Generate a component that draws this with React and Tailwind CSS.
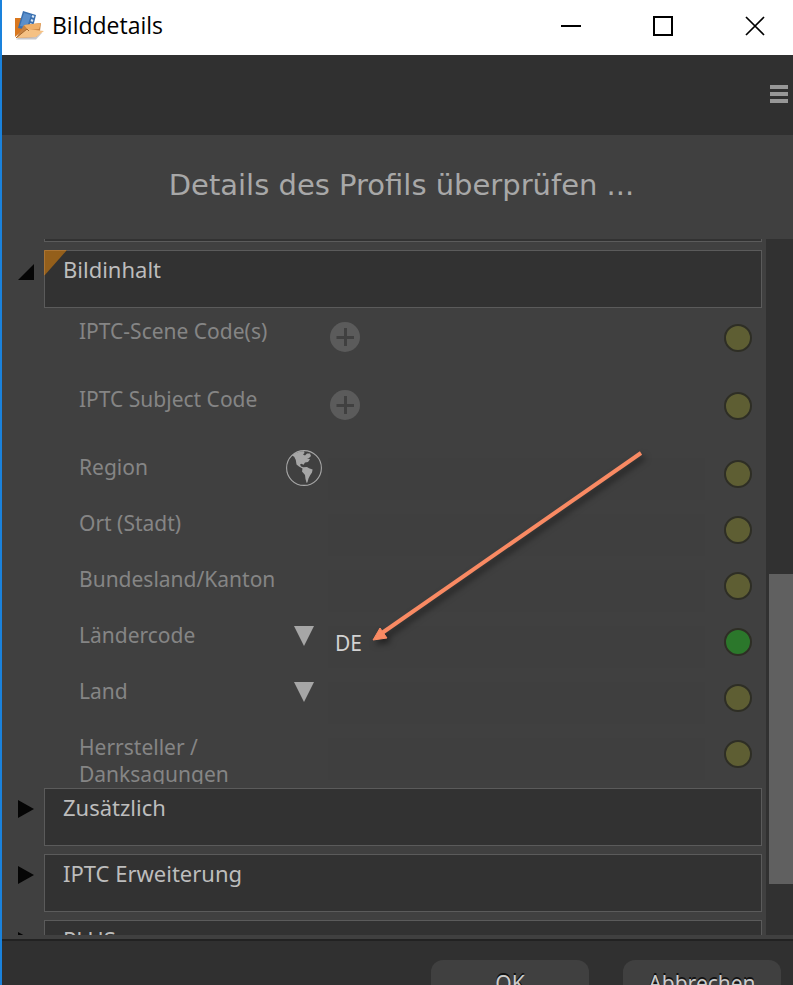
const statusColors = {
  open: "bg-[#5e5e33]",
  filled: "bg-[#2b772b]",
};

const fields = [
  { id: "scene", label: "IPTC-Scene Code(s)", type: "add", status: "open" },
  { id: "subject", label: "IPTC Subject Code", type: "add", status: "open" },
  { id: "region", label: "Region", icon: "globe", status: "open" },
  { id: "city", label: "Ort (Stadt)", status: "open" },
  { id: "state", label: "Bundesland/Kanton", status: "open" },
  { id: "countryCode", label: "Ländercode", icon: "down", value: "DE", status: "filled" },
  { id: "country", label: "Land", icon: "down", status: "open" },
  { id: "credits", label: "Herrsteller / Danksagungen", status: "open" },
];

function AppIcon() {
  return (
    <svg width="30" height="30" viewBox="0 0 30 30" aria-hidden="true">
      <path d="M2 28.5 L22 28.5 L28 22 L8 24 Z" fill="#8f8f9a" opacity="0.5" />
      <path d="M1 7 H8 V20 L1 26 Z" fill="#d9771e" />
      <path d="M9 0 L22 4 L18 20 L4 17 Z" fill="#3a70b0" />
      <path d="M10 2 L17 4 L13 16 L6 15 Z" fill="#5b8fcb" />
      <path d="M18 5 L20 6 M17 9 L19 10 M16 13 L18 14" stroke="#dce8f5" strokeWidth="2" />
      <path d="M10 14 L27 12 L26 20 L22 26 L2 27 Z" fill="#c98342" />
      <path d="M10 14 L27 12 L25 18 L14 19 Z" fill="#efb06a" />
      <path d="M2 27 L13 18 L30 20 L22 26 Z" fill="#f5c184" />
      <path d="M2 27 L13 18 L15 20" fill="none" stroke="#a5672d" />
    </svg>
  );
}

function Globe() {
  return (
    <svg width="36" height="36" viewBox="0 0 36 36" aria-hidden="true">
      <circle cx="18" cy="18" r="17.4" fill="none" stroke="#a6a6a6" strokeWidth="1.1" />
      <path
        fill="#a6a6a6"
        d="M6 5.5 L9 3.2 L14 1.6 L18 1.2 L18.5 3 L17 4.5 L19 5.5 L21 3.4 L24 3.6 L25 6 L23 8 L21 8.2 L24 9.2 L22 12 L19 12.5 L17.5 14.8 L15.5 13.8 L14 14.5 L15 16.5 L17.5 17.2 L21 17 L23 18.3 L26.6 19.5 L26 22.5 L24 25.5 L22.5 28.5 L21.4 32.5 L20.5 32.8 L19.5 29 L19 25 L16 21.5 L16.5 18.6 L13 16.5 L10.5 14.5 L9.8 10 L8.2 6.8 Z"
      />
    </svg>
  );
}

function SectionHeader({ title, open = false }) {
  return (
    <button type="button" aria-expanded={open} className="flex w-full items-start gap-2.5 text-left">
      <svg width="16" height="18" viewBox="0 0 16 18" className="mt-3 shrink-0" aria-hidden="true">
        <path d={open ? "M16 2 V18 H0 Z" : "M0 0 L16 9 L0 18 Z"} fill="#050505" />
      </svg>
      <span className="relative h-[58px] flex-1 border border-[#5b5b5b] bg-[#323232] pt-1 pl-[18px] text-[22px] leading-7 text-[#bdbdbd]">
        {open && (
          <svg width="23" height="26" viewBox="0 0 23 26" className="absolute -top-px -left-px" aria-hidden="true">
            <path d="M0 0 H23 L0 26 Z" fill="#945f1b" />
            <path d="M0.5 25 V0.5 H22" fill="none" stroke="#ab7433" />
          </svg>
        )}
        <span className="relative">{title}</span>
      </span>
    </button>
  );
}

function FieldRow({ field }) {
  return (
    <div className={`flex items-start ${field.type === "add" ? "h-[62px]" : "h-[50px]"}`}>
      <label
        htmlFor={field.id}
        className="max-h-full w-[207px] shrink-0 overflow-hidden text-[21px] leading-[27px] text-[#858585]"
      >
        {field.label}
      </label>
      <div className="flex w-[42px] shrink-0">
        {field.icon === "globe" && (
          <button type="button" aria-label={field.label} className="-mt-1">
            <Globe />
          </button>
        )}
        {field.icon === "down" && (
          <button type="button" aria-label={field.label} className="mt-1 ml-2">
            <svg width="20" height="20" viewBox="0 0 20 20" aria-hidden="true">
              <path d="M0 0 H20 L10 20 Z" fill="#a6a6a6" />
            </svg>
          </button>
        )}
      </div>
      <div className="min-w-0 flex-1">
        {field.type === "add" ? (
          <button id={field.id} type="button" className="mt-1 ml-0.5 block">
            <svg width="30" height="30" viewBox="0 0 30 30" aria-hidden="true">
              <circle cx="15" cy="15" r="15" fill="#5b5b5b" />
              <path d="M15.5 6 V24 M6.5 15.5 H24" stroke="#404040" strokeWidth="3" />
            </svg>
          </button>
        ) : (
          <input
            id={field.id}
            defaultValue={field.value}
            className="mt-1 block h-[42px] w-full bg-[#3f3f3f] px-[7px] pb-2 text-[21px] text-[#d2d2d2] outline-none"
          />
        )}
      </div>
      <span className={`mt-1.5 ml-[19px] size-7 shrink-0 rounded-full border-2 border-[#2e2e25] ${statusColors[field.status]}`} />
    </div>
  );
}

export default function App() {
  return (
    <div className="flex h-screen flex-col overflow-hidden border-l-2 border-[#1a82dc] bg-[#404040] font-['Noto_Sans',sans-serif]">
      {/* Title bar */}
      <header className="flex h-[55px] shrink-0 items-center bg-white pb-1 text-black">
        <div className="flex flex-1 items-center gap-2 pl-3">
          <AppIcon />
          <h1 className="font-['Open_Sans',sans-serif] text-[23px]">Bilddetails</h1>
        </div>
        <div className="flex gap-[72px] pr-7">
          <button type="button" aria-label="Minimieren">
            <svg width="20" height="20" viewBox="0 0 20 20" aria-hidden="true">
              <path d="M0 10 H20" stroke="#000" strokeWidth="2" />
            </svg>
          </button>
          <button type="button" aria-label="Maximieren">
            <svg width="20" height="20" viewBox="0 0 20 20" aria-hidden="true">
              <path d="M1 1 H19 V19 H1 Z" fill="none" stroke="#000" strokeWidth="2" />
            </svg>
          </button>
          <button type="button" aria-label="Schließen">
            <svg width="20" height="20" viewBox="0 0 20 20" aria-hidden="true">
              <path d="M1 1 L19 19 M19 1 L1 19" stroke="#000" strokeWidth="1.7" />
            </svg>
          </button>
        </div>
      </header>

      {/* Toolbar */}
      <div className="flex h-20 shrink-0 items-center justify-end bg-[#303030] pr-[5px] pb-0.5">
        <button type="button" aria-label="Menü">
          <svg width="18" height="18" viewBox="0 0 18 18" aria-hidden="true">
            <path d="M0 2 H18 M0 9 H18 M0 16 H18" stroke="#979797" strokeWidth="4" />
          </svg>
        </button>
      </div>

      <h2 className="h-[104px] shrink-0 pt-7 pl-2 text-center font-['DejaVu_Sans',sans-serif] text-[29px] leading-[44px] text-[#a8a8a8]">
        Details des Profils überprüfen ...
      </h2>

      {/* Metadata sections */}
      <div className="flex min-h-0 flex-1">
        <main className="min-w-0 flex-1 overflow-hidden pr-1 pl-4">
          <div className="ml-[26px] h-[3px] border-x border-b border-[#5b5b5b] bg-[#323232]" />
          <div className="mt-2">
            <SectionHeader title="Bildinhalt" open />
          </div>
          <div className="relative mt-2.5 mb-1 flex flex-col gap-1.5 pr-2.5 pl-[61px]">
            {fields.map((field) => (
              <FieldRow key={field.id} field={field} />
            ))}
            <svg
              width="280"
              height="210"
              viewBox="0 0 280 210"
              className="pointer-events-none absolute top-[130px] left-[350px] drop-shadow-[3px_4px_3px_rgba(0,0,0,0.5)]"
              aria-hidden="true"
            >
              <path d="M273 5 L14 185" stroke="#f98a63" strokeWidth="4" />
              <path d="M5 192 L12 180 L19 190 Z" fill="#f98a63" stroke="#f98a63" strokeLinejoin="round" />
            </svg>
          </div>
          <div className="flex flex-col gap-2">
            <SectionHeader title="Zusätzlich" />
            <SectionHeader title="IPTC Erweiterung" />
            <SectionHeader title="PLUS" />
          </div>
        </main>
        {/* Scrollbar */}
        <div className="w-[27px] shrink-0 bg-[#313131] pt-[335px] pl-[3px]">
          <div className="h-[310px] bg-[#606060]" />
        </div>
      </div>

      <footer className="mt-1 flex h-[46px] shrink-0 items-start justify-end gap-[34px] overflow-hidden border-t-2 border-[#222222] bg-[#303030] pt-[19px] pr-3">
        <button type="button" className="h-12 w-[158px] rounded-xl bg-[#404040] text-[21px] text-[#cccccc] text-shadow-[0_-2px_0_#111111]">
          OK
        </button>
        <button type="button" className="h-12 w-[158px] rounded-xl bg-[#404040] text-[21px] text-[#cccccc] text-shadow-[0_-2px_0_#111111]">
          Abbrechen
        </button>
      </footer>
    </div>
  );
}
